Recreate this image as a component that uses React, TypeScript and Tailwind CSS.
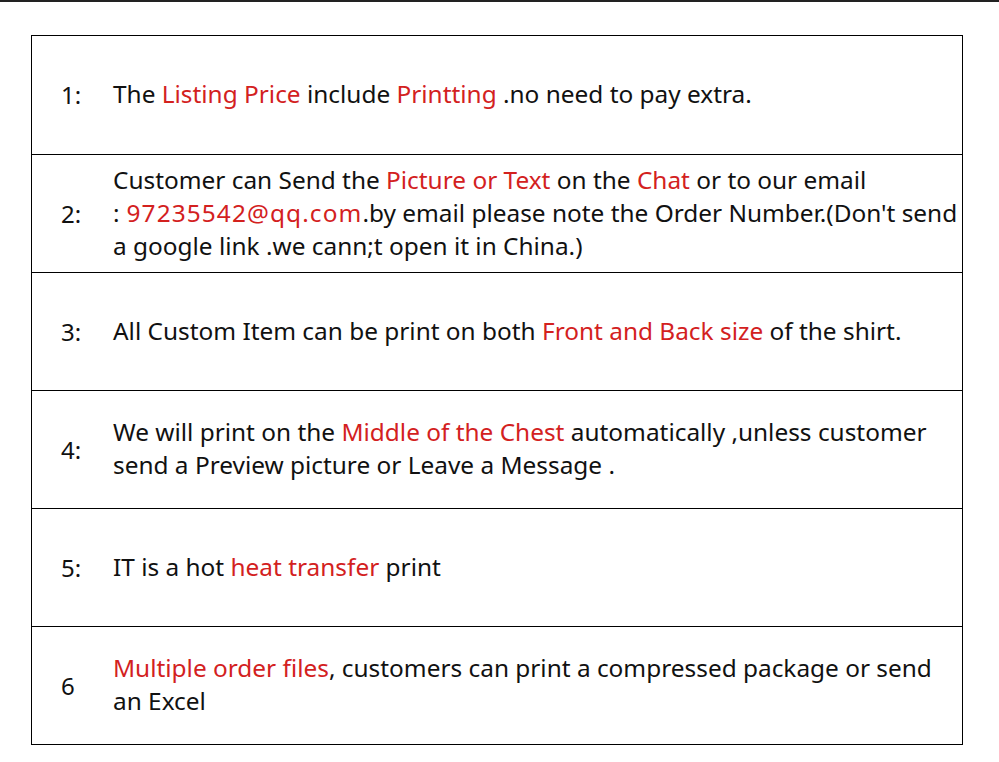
import React from "react";

const R = ({ children }: { children: React.ReactNode }) => (
  <span className="text-[#d3211e]">{children}</span>
);

const rows: { num: string; body: React.ReactNode }[] = [
  {
    num: "1:",
    body: (
      <>
        The <R>Listing Price</R> include <R>Printting</R> .no need to pay extra.
      </>
    ),
  },
  {
    num: "2:",
    body: (
      <>
        Customer can Send the <R>Picture or Text</R> on the <R>Chat</R> or to our email
        <br />
        <span className="pr-[7px]">:</span>
        <span className="text-[#d3211e] tracking-[1.1px]">97235542@qq.com</span>.by email please note the Order
        Number.(Don't send
        <br />a google link .we cann;t open it in China.)
      </>
    ),
  },
  {
    num: "3:",
    body: (
      <>
        All Custom Item can be print on both <R>Front and Back size</R> of the shirt.
      </>
    ),
  },
  {
    num: "4:",
    body: (
      <>
        We will print on the <R>Middle of the Chest</R> automatically ,unless customer
        <br />
        send a Preview picture or Leave a Message .
      </>
    ),
  },
  {
    num: "5:",
    body: (
      <>
        IT is a hot <R>heat transfer</R> print
      </>
    ),
  },
  {
    num: "6",
    body: (
      <>
        <R>Multiple order files</R>, customers can print a compressed package or send
        <br />
        an Excel
      </>
    ),
  },
];

export default function App() {
  return (
    <div
      className="w-[999px] h-[762px] bg-white overflow-hidden text-[#111]"
      style={{ fontFamily: '"Noto Sans", "Open Sans", sans-serif' }}
    >
      <div className="h-[2px] bg-[#222]" />
      <div className="ml-[31px] mt-[33px] w-[932px] border-[1.5px] border-black">
        {rows.map((r, i) => (
          <div
            key={r.num}
            className={`flex items-center h-[118px] ${i > 0 ? "border-t-[1.5px] border-black" : ""}`}
          >
            <div className="w-[81px] shrink-0 pl-[29px] text-[24px]">{r.num}</div>
            <div className="flex-1 text-[24.4px] leading-[33px] whitespace-nowrap -mt-[3px]">{r.body}</div>
          </div>
        ))}
      </div>
    </div>
  );
}
